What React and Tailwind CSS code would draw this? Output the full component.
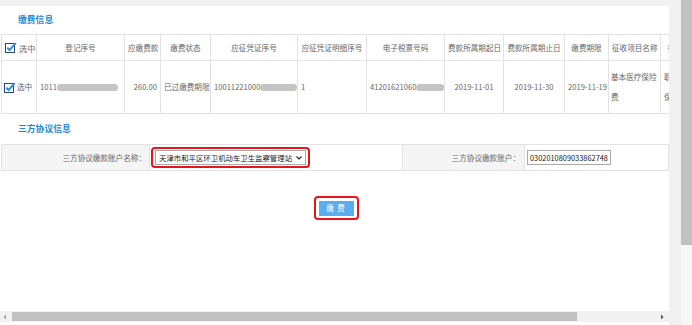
import React from 'react'

const COLS = [35, 88, 36, 50, 87, 69, 78, 59, 61, 44, 52, 60]

const HEAD = [
  '选中', '登记序号', '应缴费款', '缴费状态', '应征凭证序号', '应征凭证明细序号',
  '电子税票号码', '费款所属期起日', '费款所属期止日', '缴费期限', '征收项目名称', '征收品目名称',
]

function Check() {
  return (
    <svg width="12" height="11" viewBox="0 0 12 11" className="shrink-0">
      <rect x="0.5" y="1.5" width="9" height="9" fill="#fff" stroke="#27457f" />
      <path d="M2.3 5.6 L4.6 8 L10.8 1.2" fill="none" stroke="#2a8fe8" strokeWidth="2" />
    </svg>
  )
}

function Blur({ w }) {
  return <span className="inline-block h-[7px] rounded-full bg-[#c4c4c4] align-middle" style={{ width: w }} />
}

export default function App() {
  const td = 'border border-[#e2e2e2] px-[3px] align-middle'
  return (
    <div
      className="flex h-[325px] w-[692px] overflow-hidden bg-white text-[7.6px] text-[#666]"
      style={{ fontFamily: '"Noto Sans CJK SC", "Noto Sans", sans-serif' }}
    >
      <div className="flex w-[669px] shrink-0 flex-col overflow-hidden">
        <div className="h-[6px] bg-[#f1f1f1]" />

        <div className="flex flex-1 flex-col overflow-hidden">
          {/* 缴费信息 */}
          <div className="flex h-[28px] items-center pl-[18px] text-[8.8px] font-bold text-[#1a8ad8]">缴费信息</div>
          <div className="overflow-hidden pl-[1px]">
            <table className="w-[719px] table-fixed border-collapse leading-[20px]">
              <colgroup>
                {COLS.map((w, i) => <col key={i} style={{ width: w }} />)}
              </colgroup>
              <thead>
                <tr className="h-[26px]">
                  {HEAD.map((h, i) => (
                    <th key={h} className={`${td} overflow-hidden whitespace-nowrap font-normal ${i === 0 ? 'text-left' : 'text-center'}`}>
                      {i === 0 ? (
                        <span className="flex items-center gap-[2px] text-[8.2px]"><Check />选中</span>
                      ) : h}
                    </th>
                  ))}
                </tr>
              </thead>
              <tbody>
                <tr className="h-[53px]">
                  <td className="border border-[#e2e2e2] px-[2px] align-middle">
                    <span className="flex items-center gap-[1px] whitespace-nowrap"><Check />选中</span>
                  </td>
                  <td className={`${td} whitespace-nowrap`}>1011<Blur w={61} /></td>
                  <td className={`${td} text-right`}>260.00</td>
                  <td className={`${td} whitespace-nowrap`}>已过缴费期限</td>
                  <td className={`${td} overflow-hidden whitespace-nowrap`}>10011221000<Blur w={37} /></td>
                  <td className={td}>1</td>
                  <td className={`${td} overflow-hidden whitespace-nowrap`}>41201621060<Blur w={28} /></td>
                  <td className={`${td} whitespace-nowrap text-center`}>2019-11-01</td>
                  <td className={`${td} whitespace-nowrap text-center`}>2019-11-30</td>
                  <td className={`${td} whitespace-nowrap px-[1px] text-center`}>2019-11-19</td>
                  <td className="border border-[#e2e2e2] px-[2px] align-middle">基本医疗保险费</td>
                  <td className={td}>职工基本医疗保险</td>
                </tr>
              </tbody>
            </table>
          </div>

          {/* 三方协议信息 */}
          <div className="flex h-[30px] items-center pl-[18px] text-[8.8px] font-bold text-[#1a8ad8]">三方协议信息</div>
          <div className="pl-[1px]">
            <div className="flex h-[27px] border border-[#e2e2e2]">
              <div className="flex w-[147px] items-center justify-end bg-[#f5f5f5] pr-[3px] whitespace-nowrap">三方协议缴款账户名称：</div>
              <div className="flex w-[253px] items-center border-l border-[#e2e2e2] pl-[1px]">
                <div className="flex h-[21px] items-center rounded-[4px] border-2 border-[#e8141c] px-[2px]">
                  <div className="flex h-[15px] w-[151px] items-center justify-between border border-[#a8a8a8] bg-white pl-[3px] pr-[3px] whitespace-nowrap text-[7.4px] text-[#222]">
                    天津市和平区环卫机动车卫生监察管理站
                    <svg width="6" height="4" viewBox="0 0 6 4" className="shrink-0"><path d="M0.5 0.5 L3 3 L5.5 0.5" fill="none" stroke="#222" strokeWidth="1.1" /></svg>
                  </div>
                </div>
              </div>
              <div className="flex w-[122px] items-center justify-end border-l border-[#e2e2e2] bg-[#f5f5f5] pr-[4px] whitespace-nowrap">三方协议缴款账户：</div>
              <div className="flex flex-1 items-center border-l border-[#e2e2e2] pl-[2px]">
                <div className="flex h-[15px] w-[84px] items-center overflow-hidden whitespace-nowrap border border-[#a8a8a8] pl-[2px] text-[7.4px] text-[#222]">0302010809033862748</div>
              </div>
            </div>
          </div>

          <div className="mt-[25px] flex justify-center pl-[3px]">
            <div className="flex h-[24px] items-center rounded-[4px] border-2 border-[#e8141c] px-[3px]">
              <button className="h-[15px] w-[35px] bg-[#5aaef0] text-[7.5px] tracking-[1px] text-white">缴 费</button>
            </div>
          </div>
        </div>

        {/* horizontal scrollbar */}
        <div className="flex h-[11px] items-center bg-[#f1f1f1] pl-[2px] pr-[4px]">
          <svg width="6" height="6" viewBox="0 0 6 6"><path d="M4 0.5 L1.5 3 L4 5.5 Z" fill="#a3a3a3" /></svg>
          <div className="ml-[4px] h-[9px] w-[565px] bg-[#c1c1c1]" />
          <div className="flex-1" />
          <svg width="6" height="6" viewBox="0 0 6 6"><path d="M2 0.5 L4.5 3 L2 5.5 Z" fill="#505050" /></svg>
        </div>
        <div className="h-[3px] bg-white" />
      </div>

      {/* vertical scrollbar */}
      <div className="w-[12px] shrink-0 bg-[#f1f1f1]" />
      <div className="flex w-[11px] shrink-0 flex-col bg-[#f7f7f7]">
        <div className="h-[245px] bg-[#c1c1c1]" />
      </div>
    </div>
  )
}
